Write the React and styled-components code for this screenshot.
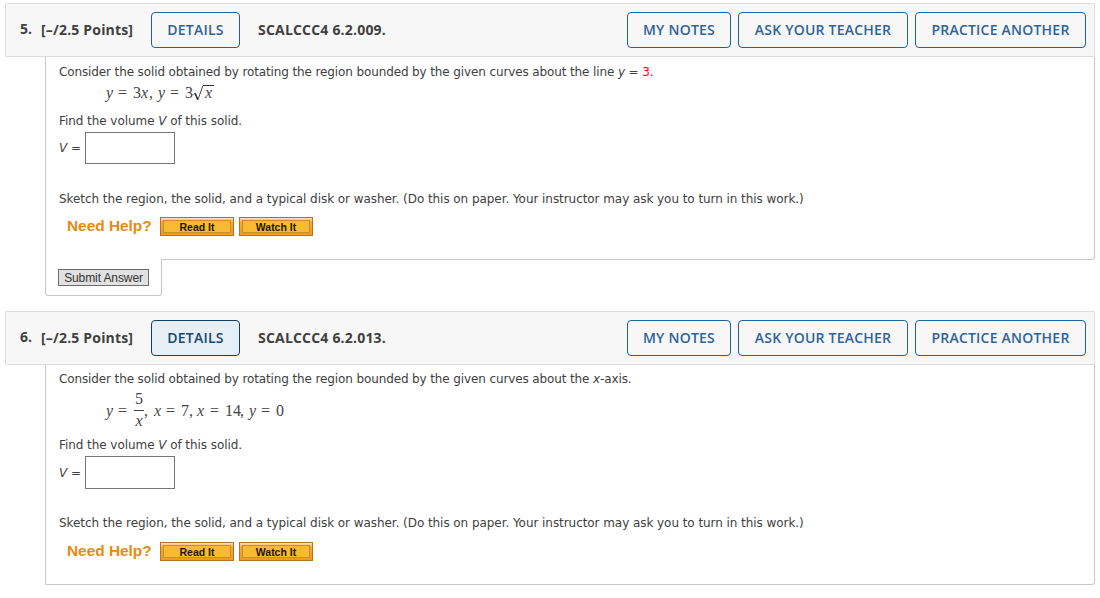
import React from 'react';
import styled, { createGlobalStyle } from 'styled-components';

const GlobalStyle = createGlobalStyle`
    * { box-sizing: border-box; }
    body {
        margin: 0;
        background: #fff;
        color: #404040;
        font-family: "DejaVu Sans", Verdana, sans-serif;
        font-size: 12px;
    }
`;

const Page = styled.div`
    padding: 3px 5px 0;
    width: 1100px;
    height: 598px;
    overflow: hidden;
`;
const Question = styled.section`
    margin-bottom: 15px;
`;
const Header = styled.div`
    display: flex;
    align-items: center;
    height: 54px;
    padding: 0 8px 0 14px;
    background: #f7f7f7;
    border: 1px solid #ddd;
    border-radius: 1px;
    font-family: "Open Sans", sans-serif;
    font-size: 14px;
    font-weight: 700;
    white-space: nowrap;
`;
const Num = styled.span`
    width: 21px;
    margin-top: -3px;
`;
const Points = styled.span`
    width: 110px;
    margin-top: -2px;
    letter-spacing: 0.18px;
`;
const Code = styled.span`
    margin: -2px 0 0 18px;
    letter-spacing: 0.2px;
`;
const Actions = styled.div`
    display: flex;
    gap: 7px;
    margin-left: auto;
`;
const Btn = styled.button`
    width: ${props => props.$w}px;
    height: 36px;
    padding: 0 0 2px;
    border: 1px solid ${props => (props.$active ? '#0f4066' : '#1f62a0')};
    border-radius: 4px;
    background: ${props => (props.$active ? '#e6eff6' : 'transparent')};
    color: ${props => (props.$active ? '#17466c' : '#2f6399')};
    font: 600 14px "Open Sans", sans-serif;
    letter-spacing: 0.22px;
`;
const Body = styled.div`
    display: flow-root;
    height: ${props => props.$h}px;
    margin-left: 40px;
    padding-left: 13px;
    border: 1px solid #c8c8c8;
    border-top: 0;
    border-radius: 0 0 3px ${props => (props.$tab ? '0' : '1px')};
`;
const Line = styled.p`
    margin: ${props => props.$top || 0}px 0 0;
    height: 16px;
    line-height: 16px;
    white-space: nowrap;
    letter-spacing: ${props => props.$ls || -0.06}px;
`;
const Red = styled.span`
    color: #f00;
`;
const MathRow = styled.div`
    display: flex;
    align-items: center;
    height: ${props => props.$h}px;
    margin-left: 47px;
    font: 16px/16px "Liberation Serif", serif;
    color: #444;
`;
const Sym = styled.span`
    flex: none;
    width: ${props => props.$w}px;
    font-style: ${props => (props.$it ? 'italic' : 'normal')};
    white-space: nowrap;
`;
const Root = styled.span`
    display: flex;
    svg { display: block; width: 10px; height: 16px; }
`;
const Radicand = styled.span`
    width: 11px;
    height: 16px;
    border-top: 1px solid #333;
    padding-left: 2px;
    line-height: 14px;
    font-style: italic;
`;
const Fraction = styled.span`
    display: flex;
    flex-direction: column;
    align-items: center;
    width: 10px;
`;
const Numer = styled.span`
    height: 20px;
    border-bottom: 1px solid #444;
    width: 10px;
    text-align: center;
    line-height: 16px;
`;
const Denom = styled.span`
    height: 20px;
    padding-top: 2px;
    font-style: italic;
`;
const AnswerRow = styled.div`
    display: flex;
    align-items: center;
    margin-top: ${props => props.$top}px;
    height: ${props => props.$h}px;
`;
const AnswerLabel = styled.label`
    width: 26px;
    white-space: nowrap;
`;
const AnswerInput = styled.input`
    width: 90px;
    height: 100%;
    border: 1px solid #767676;
    background: #fff;
    border-radius: 0;
    padding: 0;
`;
const Help = styled.div`
    display: flex;
    align-items: center;
    height: 19px;
    margin: ${props => props.$top}px 0 0 8px;
`;
const HelpTitle = styled.span`
    width: 93px;
    margin-top: -3px;
    color: #e68a12;
    font: bold 15.4px/19px "Liberation Sans", Arial, sans-serif;
    white-space: nowrap;
`;
const HelpBtn = styled.button`
    width: 74px;
    height: 19px;
    margin-right: 5px;
    padding: 2px;
    border: 1px solid #b37429;
    background: linear-gradient(#ffe3c4 0, #f6a63a 4px, #f29a1f 100%);
`;
const HelpFace = styled.span`
    display: block;
    height: 13px;
    border: 1px solid #cb8d24;
    background: #f6ba33;
    color: #1d1600;
    font: bold 10.5px/12px "Liberation Sans", Arial, sans-serif;
`;
const SubmitTab = styled.div`
    position: relative;
    width: 117px;
    height: 37px;
    margin: -1px 0 0 40px;
    padding: 10px 0 0 12px;
    background: #fff;
    border: 1px solid #c8c8c8;
    border-top: 0;
    border-radius: 0 0 3px 3px;
`;
const Submit = styled.button`
    display: block;
    width: 91px;
    height: 17px;
    padding: 1px 0 0;
    border: 1px solid #6b6b6b;
    background: #e1e1e1;
    color: #333;
    font: 12px/15px "Liberation Sans", Arial, sans-serif;
    letter-spacing: -0.1px;
    white-space: nowrap;
`;

const QuestionHeader = ({ num, code, active }) => (
  <Header>
    <Num>{num}.</Num>
    <Points>[–/2.5 Points]</Points>
    <Btn $w={89} $active={active}>DETAILS</Btn>
    <Code>{code}</Code>
    <Actions>
      <Btn $w={104}>MY NOTES</Btn>
      <Btn $w={170}>ASK YOUR TEACHER</Btn>
      <Btn $w={171}>PRACTICE ANOTHER</Btn>
    </Actions>
  </Header>
)

const Answer = ({ top, h }) => (
  <AnswerRow $top={top} $h={h}>
    <AnswerLabel><i>V</i> =</AnswerLabel>
    <AnswerInput />
  </AnswerRow>
)

const NeedHelp = ({ top }) => (
  <Help $top={top}>
    <HelpTitle>Need Help?</HelpTitle>
    <HelpBtn><HelpFace>Read It</HelpFace></HelpBtn>
    <HelpBtn><HelpFace>Watch It</HelpFace></HelpBtn>
  </Help>
)

const Find = ({ top }) => <Line $top={top}>Find the volume <i>V</i> of this solid.</Line>

const Sketch = ({ top }) => (
  <Line $top={top}>
    Sketch the region, the solid, and a typical disk or washer. (Do this on paper. Your instructor may ask you to turn in this work.)
  </Line>
)

const App = () => (
  <Page>
    <GlobalStyle />
    <Question>
      <QuestionHeader num="5" code="SCALCCC4 6.2.009." />
      <Body $h={203} $tab>
        <Line $top={7} $ls={-0.12}>
          Consider the solid obtained by rotating the region bounded by the given curves about the line <i>y</i> = <Red>3</Red>.
        </Line>
        <MathRow $h={26}>
          <Sym $w={12} $it>y</Sym><Sym $w={15}>=</Sym><Sym $w={8}>3</Sym><Sym $w={8} $it>x</Sym><Sym $w={9}>,</Sym>
          <Sym $w={12} $it>y</Sym><Sym $w={15}>=</Sym><Sym $w={8}>3</Sym>
          <Root>
            <svg viewBox="0 0 10 16" fill="none" stroke="#333">
              <path d="M.5 9.5L2.3 8.2L4.8 15L10 .5" strokeWidth="0.9" />
              <path d="M2.2 8.6L4.8 14.5" strokeWidth="1.5" />
            </svg>
            <Radicand>x</Radicand>
          </Root>
        </MathRow>
        <Find top={7} />
        <Answer top={3} h={32} />
        <Sketch top={27} />
        <NeedHelp top={10} />
      </Body>
      <SubmitTab><Submit>Submit Answer</Submit></SubmitTab>
    </Question>
    <Question>
      <QuestionHeader num="6" code="SCALCCC4 6.2.013." active />
      <Body $h={220}>
        <Line $top={6} $ls={-0.12}>
          Consider the solid obtained by rotating the region bounded by the given curves about the <i>x</i>-axis.
        </Line>
        <MathRow $h={48}>
          <Sym $w={12} $it>y</Sym><Sym $w={16}>=</Sym>
          <Fraction><Numer>5</Numer><Denom>x</Denom></Fraction>
          <Sym $w={10}>,</Sym>
          <Sym $w={12} $it>x</Sym><Sym $w={15}>=</Sym><Sym $w={8}>7</Sym><Sym $w={8}>,</Sym>
          <Sym $w={13} $it>x</Sym><Sym $w={15}>=</Sym><Sym $w={15}>14</Sym><Sym $w={9}>,</Sym>
          <Sym $w={12} $it>y</Sym><Sym $w={15}>=</Sym><Sym $w={8}>0</Sym>
        </MathRow>
        <Find top={2} />
        <Answer top={3} h={33} />
        <Sketch top={26} />
        <NeedHelp top={11} />
      </Body>
    </Question>
  </Page>
)

export default App;
